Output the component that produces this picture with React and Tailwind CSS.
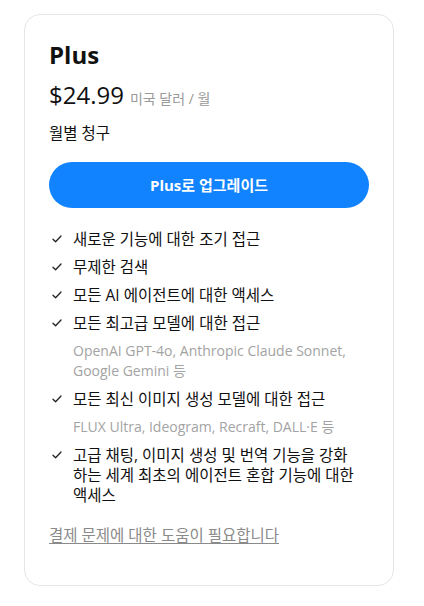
const features = [
  { text: "새로운 기능에 대한 조기 접근" },
  { text: "무제한 검색" },
  { text: "모든 AI 에이전트에 대한 액세스" },
  {
    text: "모든 최고급 모델에 대한 접근",
    note: "OpenAI GPT-4o, Anthropic Claude Sonnet, Google Gemini 등",
  },
  {
    text: "모든 최신 이미지 생성 모델에 대한 접근",
    note: "FLUX Ultra, Ideogram, Recraft, DALL·E 등",
  },
  {
    text: "고급 채팅, 이미지 생성 및 번역 기능을 강화하는 세계 최초의 에이전트 혼합 기능에 대한 액세스",
  },
];

const Check = () => (
  <svg width="10" height="8" viewBox="0 0 10 8" fill="none" className="mt-[6px]">
    <path d="M1 4.2 L3.6 6.8 L9 1" stroke="#222" strokeWidth="1.3" strokeLinecap="round" strokeLinejoin="round" />
  </svg>
);

export default function App() {
  return (
    <div
      className="min-h-[606px] bg-white pt-[14px] pl-[24px]"
      style={{ fontFamily: '"Open Sans", "Noto Sans CJK KR", sans-serif' }}
    >
      <div className="w-[370px] rounded-2xl border border-[#e6e6e6] bg-white px-6 pt-6 pb-10 text-[#111]">
        <h1 className="text-2xl font-bold leading-8">Plus</h1>

        <div className="mt-[6px] flex h-9 items-baseline gap-[6px]">
          <span className="text-[24px] leading-9">$24.99</span>
          <span className="text-[14px] leading-9 text-[#9a9a9a]">미국 달러 / 월</span>
        </div>

        <p className="mt-[10px] text-[15.5px] leading-5">월별 청구</p>

        <button className="mt-[19px] flex h-[46px] w-full items-center justify-center rounded-full bg-[#1283fe] text-[15px] font-bold text-white">
          Plus로 업그레이드
        </button>

        <ul className="mt-[21px] space-y-2 pr-[14px] leading-5">
          {features.map((f, i) => (
            <li key={i}>
              <div className="flex">
                <span className="flex w-6 shrink-0 justify-start pl-[3px]">
                  <Check />
                </span>
                <span className="text-[15.5px]">{f.text}</span>
              </div>
              {f.note && (
                <p className="mt-2 pl-6 text-sm text-[#a3a3a3]">{f.note}</p>
              )}
            </li>
          ))}
        </ul>

        <a href="#" className="mt-5 block text-[15.5px] leading-5 text-[#8a8a8a] underline underline-offset-2">
          결제 문제에 대한 도움이 필요합니다
        </a>
      </div>
    </div>
  );
}
